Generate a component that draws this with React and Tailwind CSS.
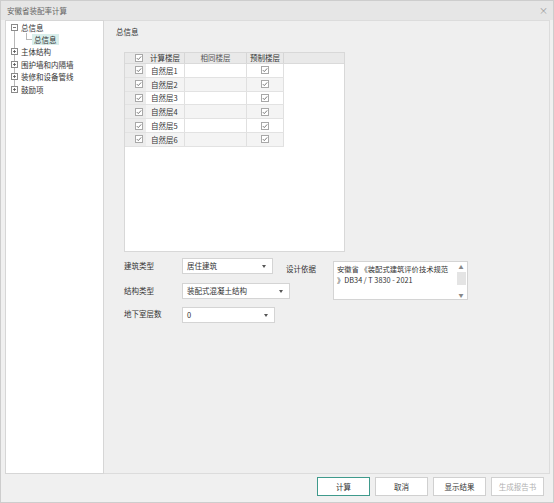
import React from "react";

const font = { fontFamily: '"Noto Sans CJK SC", "Noto Sans", sans-serif' };

const Check = () => (
  <svg width="8" height="8" viewBox="0 0 8 8" className="block">
    <rect x="0.5" y="0.5" width="7" height="7" fill="#fff" stroke="#a8a8a8" />
    <path d="M1.8 4.1 L3.3 5.6 L6.2 2.4" fill="none" stroke="#6b6b6b" strokeWidth="0.9" />
  </svg>
);

const TreeBox = ({ open }) => (
  <svg width="7" height="7" viewBox="0 0 7 7" className="block bg-white">
    <rect x="0.5" y="0.5" width="6" height="6" fill="#fff" stroke="#8a8a8a" />
    <path d="M2 3.5 H5" stroke="#555" strokeWidth="0.8" />
    {!open && <path d="M3.5 2 V5" stroke="#555" strokeWidth="0.8" />}
  </svg>
);

const rows = ["自然层1", "自然层2", "自然层3", "自然层4", "自然层5", "自然层6"];

const Arrow = () => (
  <svg width="4" height="3" viewBox="0 0 4 3" className="block">
    <path d="M0 0 H4 L2 3 Z" fill="#555" />
  </svg>
);

const Select = ({ value, className }) => (
  <div
    className={`h-[16px] bg-white border border-[#d4d4d4] flex items-center justify-between pl-[4px] pr-[6px] text-[7.5px] text-[#333] ${className}`}
  >
    <span>{value}</span>
    <Arrow />
  </div>
);

const Button = ({ children, primary, disabled }) => (
  <button
    className={`w-[53px] h-[19px] bg-white text-[7.5px] ${
      primary ? "border-[1.5px] border-[#3f9a8c]" : "border border-[#d0d0d0]"
    } ${disabled ? "text-[#b0b0b0]" : "text-[#333]"}`}
  >
    {children}
  </button>
);

export default function App() {
  return (
    <div
      style={font}
      className="w-[554px] h-[503px] bg-[#f0f0f0] border border-[#cdcdcd] flex flex-col overflow-hidden"
    >
      {/* title bar */}
      <div className="h-[19px] bg-[#e6e6e6] flex items-center justify-between pl-[6px] pr-[5px] shrink-0">
        <span className="text-[7.5px] text-[#666]">安徽省装配率计算</span>
        <span className="text-[9px] text-[#999] leading-none">×</span>
      </div>

      {/* body */}
      <div className="flex h-[454px] pl-[4px] pr-[3px]">
        {/* tree */}
        <div className="w-[99px] bg-white border border-[#d6d6d6] relative text-[7.5px] text-[#333]">
          <div className="absolute left-[8px] top-[10px] w-px h-[58px] bg-[#b8b8b8]" />
          <div className="absolute left-[20px] top-[12px] w-px h-[7px] bg-[#b8b8b8]" />
          <div className="absolute left-[20px] top-[18px] w-[6px] h-px bg-[#b8b8b8]" />
          <div className="relative flex flex-col">
            <div className="h-[12.4px] flex items-center">
              <div className="ml-[5px] mr-[3px]">
                <TreeBox open />
              </div>
              <span>总信息</span>
            </div>
            <div className="h-[12.4px] flex items-center">
              <span className="ml-[26px] px-[2px] bg-[#d9efec] leading-[11px]">总信息</span>
            </div>
            {["主体结构", "围护墙和内隔墙", "装修和设备管线", "鼓励项"].map((t) => (
              <div key={t} className="h-[12.4px] flex items-center">
                <div className="ml-[5px] mr-[3px]">
                  <TreeBox />
                </div>
                <span>{t}</span>
              </div>
            ))}
          </div>
        </div>

        {/* content */}
        <div className="flex-1 bg-[#efefef] border border-[#dcdcdc] border-l-0 pl-[12px] pt-[6px]">
          <div className="text-[7.5px] text-[#333] h-[10px] leading-[10px]">总信息</div>

          {/* table */}
          <div className="ml-[8px] mt-[15px] w-[221px] h-[200px] bg-white border border-[#d8d8d8] text-[7.5px] text-[#333]">
            <div className="flex h-[11px] bg-[#e9e9e9] border-b border-[#dadada]">
              <div className="w-[21px] flex items-center justify-end pr-[3px]">
                <Check />
              </div>
              <div className="w-[39px] flex items-center justify-center border-r border-[#d6d6d6]">计算楼层</div>
              <div className="w-[62px] flex items-center justify-center border-r border-[#d6d6d6] text-[#555]">相同楼层</div>
              <div className="w-[37px] flex items-center justify-center border-r border-[#d6d6d6]">预制楼层</div>
              <div className="flex-1" />
            </div>
            {rows.map((r, i) => (
              <div key={r} className="flex h-[13.8px]">
                <div className="w-[21px] bg-[#ececec] flex items-center justify-end pr-[3px] border-b border-[#e2e2e2]">
                  <Check />
                </div>
                <div
                  className={`w-[138px] flex border-b border-[#e2e2e2] ${
                    i % 2 ? "bg-[#f4f4f4]" : "bg-white"
                  }`}
                >
                  <div className="w-[39px] flex items-center pl-[5px] border-r border-[#e0e0e0]">{r}</div>
                  <div className="w-[62px] border-r border-[#e0e0e0]" />
                  <div className="w-[37px] flex items-center justify-center border-r border-[#e0e0e0]">
                    <Check />
                  </div>
                </div>
              </div>
            ))}
          </div>

          {/* form */}
          <div className="ml-[8px] mt-[6px] flex text-[7.5px] text-[#333]">
            <div className="w-[162px] flex flex-col">
              <div className="flex items-center h-[16px]">
                <span className="w-[58px]">建筑类型</span>
                <Select value="居住建筑" className="w-[91px]" />
              </div>
              <div className="flex items-center h-[16px] mt-[9px]">
                <span className="w-[58px] shrink-0">结构类型</span>
                <Select value="装配式混凝土结构" className="w-[108px] shrink-0" />
              </div>
              <div className="flex items-center h-[16px] mt-[8px]">
                <span className="w-[58px] -mt-[3px]">地下室层数</span>
                <Select value="0" className="w-[93px]" />
              </div>
            </div>
            <div className="flex items-start">
              <span className="mt-[5px] w-[47px]">设计依据</span>
              <div className="mt-[3px] w-[135px] h-[39px] bg-white border border-[#d4d4d4] flex">
                <div className="flex-1 pl-[3px] pt-[2px] leading-[11px] text-[7.3px]">
                  <div>安徽省 《装配式建筑评价技术规范</div>
                  <div>》DB34 / T 3830 - 2021</div>
                </div>
                <div className="w-[12px] flex flex-col items-center justify-between py-[1px] text-[5px] text-[#888]">
                  <span>▲</span>
                  <div className="w-[9px] flex-1 bg-[#e4e4e4] mt-[1px] mb-[6px]" />
                  <span>▼</span>
                </div>
              </div>
            </div>
          </div>
        </div>
      </div>

      {/* buttons */}
      <div className="flex-1 flex justify-end items-start pt-[3px] pr-[9px] gap-[5px]">
        <Button primary>计算</Button>
        <Button>取消</Button>
        <Button>显示结果</Button>
        <Button disabled>生成报告书</Button>
      </div>
    </div>
  );
}
